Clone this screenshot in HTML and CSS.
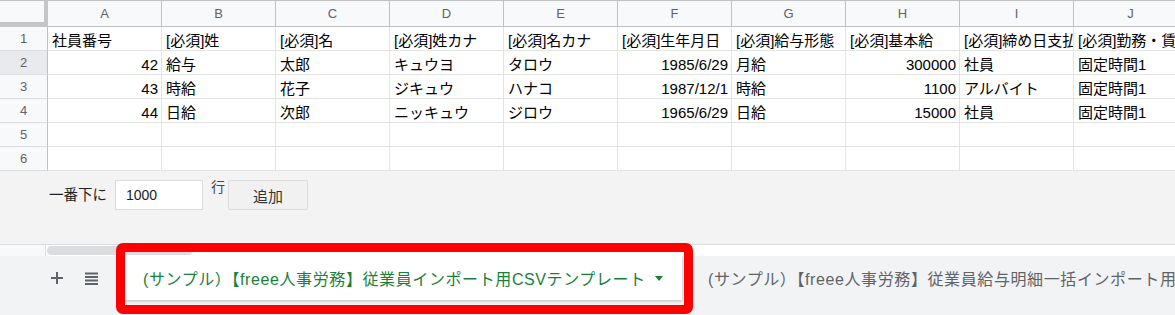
FILE: index.html
```html
<!DOCTYPE html>
<html lang="ja">
<head>
    <meta charset="UTF-8">
    <title>従業員インポート用CSVテンプレート</title>
    <link rel="stylesheet" href="styles.css">
</head>
<body>
    <div class="grid">
        <div class="corner"></div>
        <div class="col-head">A</div>
        <div class="col-head">B</div>
        <div class="col-head">C</div>
        <div class="col-head">D</div>
        <div class="col-head">E</div>
        <div class="col-head">F</div>
        <div class="col-head">G</div>
        <div class="col-head">H</div>
        <div class="col-head">I</div>
        <div class="col-head">J</div>

        <div class="row-head">1</div>
        <div class="cell">社員番号</div>
        <div class="cell">[必須]姓</div>
        <div class="cell">[必須]名</div>
        <div class="cell">[必須]姓カナ</div>
        <div class="cell">[必須]名カナ</div>
        <div class="cell">[必須]生年月日</div>
        <div class="cell">[必須]給与形態</div>
        <div class="cell">[必須]基本給</div>
        <div class="cell">[必須]締め日支払い設定</div>
        <div class="cell">[必須]勤務・賃金設定</div>

        <div class="row-head active">2</div>
        <div class="cell num">42</div>
        <div class="cell">給与</div>
        <div class="cell">太郎</div>
        <div class="cell">キュウヨ</div>
        <div class="cell">タロウ</div>
        <div class="cell num">1985/6/29</div>
        <div class="cell">月給</div>
        <div class="cell num">300000</div>
        <div class="cell">社員</div>
        <div class="cell">固定時間1</div>

        <div class="row-head">3</div>
        <div class="cell num">43</div>
        <div class="cell">時給</div>
        <div class="cell">花子</div>
        <div class="cell">ジキュウ</div>
        <div class="cell">ハナコ</div>
        <div class="cell num">1987/12/1</div>
        <div class="cell">時給</div>
        <div class="cell num">1100</div>
        <div class="cell">アルバイト</div>
        <div class="cell">固定時間1</div>

        <div class="row-head">4</div>
        <div class="cell num">44</div>
        <div class="cell">日給</div>
        <div class="cell">次郎</div>
        <div class="cell">ニッキュウ</div>
        <div class="cell">ジロウ</div>
        <div class="cell num">1965/6/29</div>
        <div class="cell">日給</div>
        <div class="cell num">15000</div>
        <div class="cell">社員</div>
        <div class="cell">固定時間1</div>

        <div class="row-head">5</div>
        <div class="cell"></div><div class="cell"></div><div class="cell"></div><div class="cell"></div><div class="cell"></div>
        <div class="cell"></div><div class="cell"></div><div class="cell"></div><div class="cell"></div><div class="cell"></div>

        <div class="row-head">6</div>
        <div class="cell"></div><div class="cell"></div><div class="cell"></div><div class="cell"></div><div class="cell"></div>
        <div class="cell"></div><div class="cell"></div><div class="cell"></div><div class="cell"></div><div class="cell"></div>
    </div>

    <div class="add-bar">
        <span class="add-label">一番下に</span>
        <input class="add-input" type="text" value="1000">
        <span class="add-unit">行</span>
        <button class="add-btn">追加</button>
    </div>

    <div class="scroll">
        <div class="scroll-left"></div>
        <div class="scroll-thumb"></div>
    </div>

    <div class="tabs">
        <div class="tab-btn">
            <svg width="12" height="12" viewBox="0 0 12 12">
                <path d="M6 0v12M0 6h12" stroke="#5f6368" stroke-width="2"/>
            </svg>
        </div>
        <div class="tab-btn">
            <svg width="13" height="13" viewBox="0 0 13 13" fill="#5f6368">
                <rect x="0" y="0.5" width="13" height="2"/>
                <rect x="0" y="4" width="13" height="2"/>
                <rect x="0" y="7.5" width="13" height="2"/>
                <rect x="0" y="11" width="13" height="2"/>
            </svg>
        </div>
        <div class="tab active">
            <span>(サンプル）【freee人事労務】従業員インポート用CSVテンプレート</span>
            <span class="caret"></span>
        </div>
        <div class="tab">
            <span>(サンプル）【freee人事労務】従業員給与明細一括インポート用CSVテンプレート</span>
        </div>
    </div>

    <!-- annotation around the active sheet tab -->
    <div class="highlight"></div>
</body>
</html>
```

FILE: styles.css
```css
body {
    margin: 0;
    width: 1175px;
    height: 315px;
    overflow: hidden;
    position: relative;
    background: #fff;
    font-family: "Liberation Sans", "Noto Sans CJK JP", sans-serif;
}

/* spreadsheet grid */
.grid {
    display: grid;
    grid-template-columns: 48px repeat(10, 114px);
    grid-template-rows: 27px repeat(6, 24px);
    overflow: hidden;
}

.grid > div {
    box-sizing: border-box;
    white-space: nowrap;
    overflow: hidden;
}

.corner {
    background: #f8f9fa;
    border-top: 1px solid #c0c0c0;
    border-right: 4px solid #c4c7c5;
    border-bottom: 5px solid #c4c7c5;
}

.col-head {
    background: #f8f9fa;
    border-top: 1px solid #c0c0c0;
    border-right: 1px solid #c0c0c0;
    border-bottom: 1px solid #c0c0c0;
    color: #5f6368;
    font-size: 13px;
    line-height: 25px;
    text-align: center;
}

.row-head {
    background: #f8f9fa;
    border-right: 1px solid #c0c0c0;
    border-bottom: 1px solid #dadce0;
    color: #5f6368;
    font-size: 13px;
    line-height: 22px;
    padding-top: 1px;
    text-align: center;
}

.row-head.active {
    background: #e8eaed;
}

.cell {
    border-right: 1px solid #e2e3e3;
    border-bottom: 1px solid #e2e3e3;
    color: #000;
    font-size: 15px;
    line-height: 20px;
    padding: 4px 3px 0 4px;
}

.cell.num {
    text-align: right;
    padding-right: 3px;
}

/* add rows bar */
.add-bar {
    height: 73px;
    box-sizing: border-box;
    padding: 9px 0 0 49px;
    background: #f3f3f3;
    display: flex;
    align-items: flex-start;
    font-size: 14px;
    color: #222;
}

.add-label {
    line-height: 30px;
    font-size: 14.5px;
}

.add-input {
    width: 88px;
    height: 30px;
    box-sizing: border-box;
    margin: 0 0 0 8px;
    padding: 0 10px;
    border: 1px solid #dadce0;
    background: #fff;
    font-family: inherit;
    font-size: 14px;
    color: #222;
}

.add-unit {
    margin-left: 8px;
    line-height: 14px;
    color: #444;
}

.add-btn {
    width: 80px;
    height: 30px;
    margin-left: 3px;
    border: 1px solid #dcdcdc;
    border-radius: 2px;
    background: #f1f1f1;
    font-family: inherit;
    font-size: 15px;
    color: #333;
}

/* horizontal scrollbar */
.scroll {
    height: 12px;
    box-sizing: border-box;
    border-top: 1px solid #dadce0;
    background: #fff;
    display: flex;
}

.scroll-left {
    width: 45px;
    background: #f8f9fa;
    border-right: 1px solid #dadce0;
}

.scroll-thumb {
    width: 146px;
    height: 9px;
    margin: 1px 0 0 1px;
    border-radius: 5px;
    background: #dadce0;
}

/* sheet tabs */
.tabs {
    height: 59px;
    background: #f1f3f4;
    display: flex;
    align-items: flex-start;
    padding-left: 44px;
    overflow: hidden;
}

.tabs > div {
    flex-shrink: 0;
}

.tab-btn {
    width: 26px;
    height: 44px;
    margin-right: 8px;
    display: flex;
    align-items: center;
    justify-content: center;
}

.tab {
    height: 44px;
    display: flex;
    align-items: center;
    white-space: nowrap;
    font-size: 16px;
    letter-spacing: 0.6px;
    color: #5f6368;
    padding-left: 26px;
}

.tab.active {
    width: 558px;
    box-sizing: border-box;
    margin-left: 12px;
    padding-left: 19px;
    background: #fff;
    color: #188038;
    box-shadow: 0 1px 3px rgba(60, 64, 67, 0.3);
}

.caret {
    margin-left: 9px;
    border-left: 4px solid transparent;
    border-right: 4px solid transparent;
    border-top: 5px solid #188038;
}

.highlight {
    position: absolute;
    left: 116px;
    top: 243px;
    width: 577px;
    height: 71px;
    box-sizing: border-box;
    border: 9px solid #f00;
    border-radius: 7px;
}
```
